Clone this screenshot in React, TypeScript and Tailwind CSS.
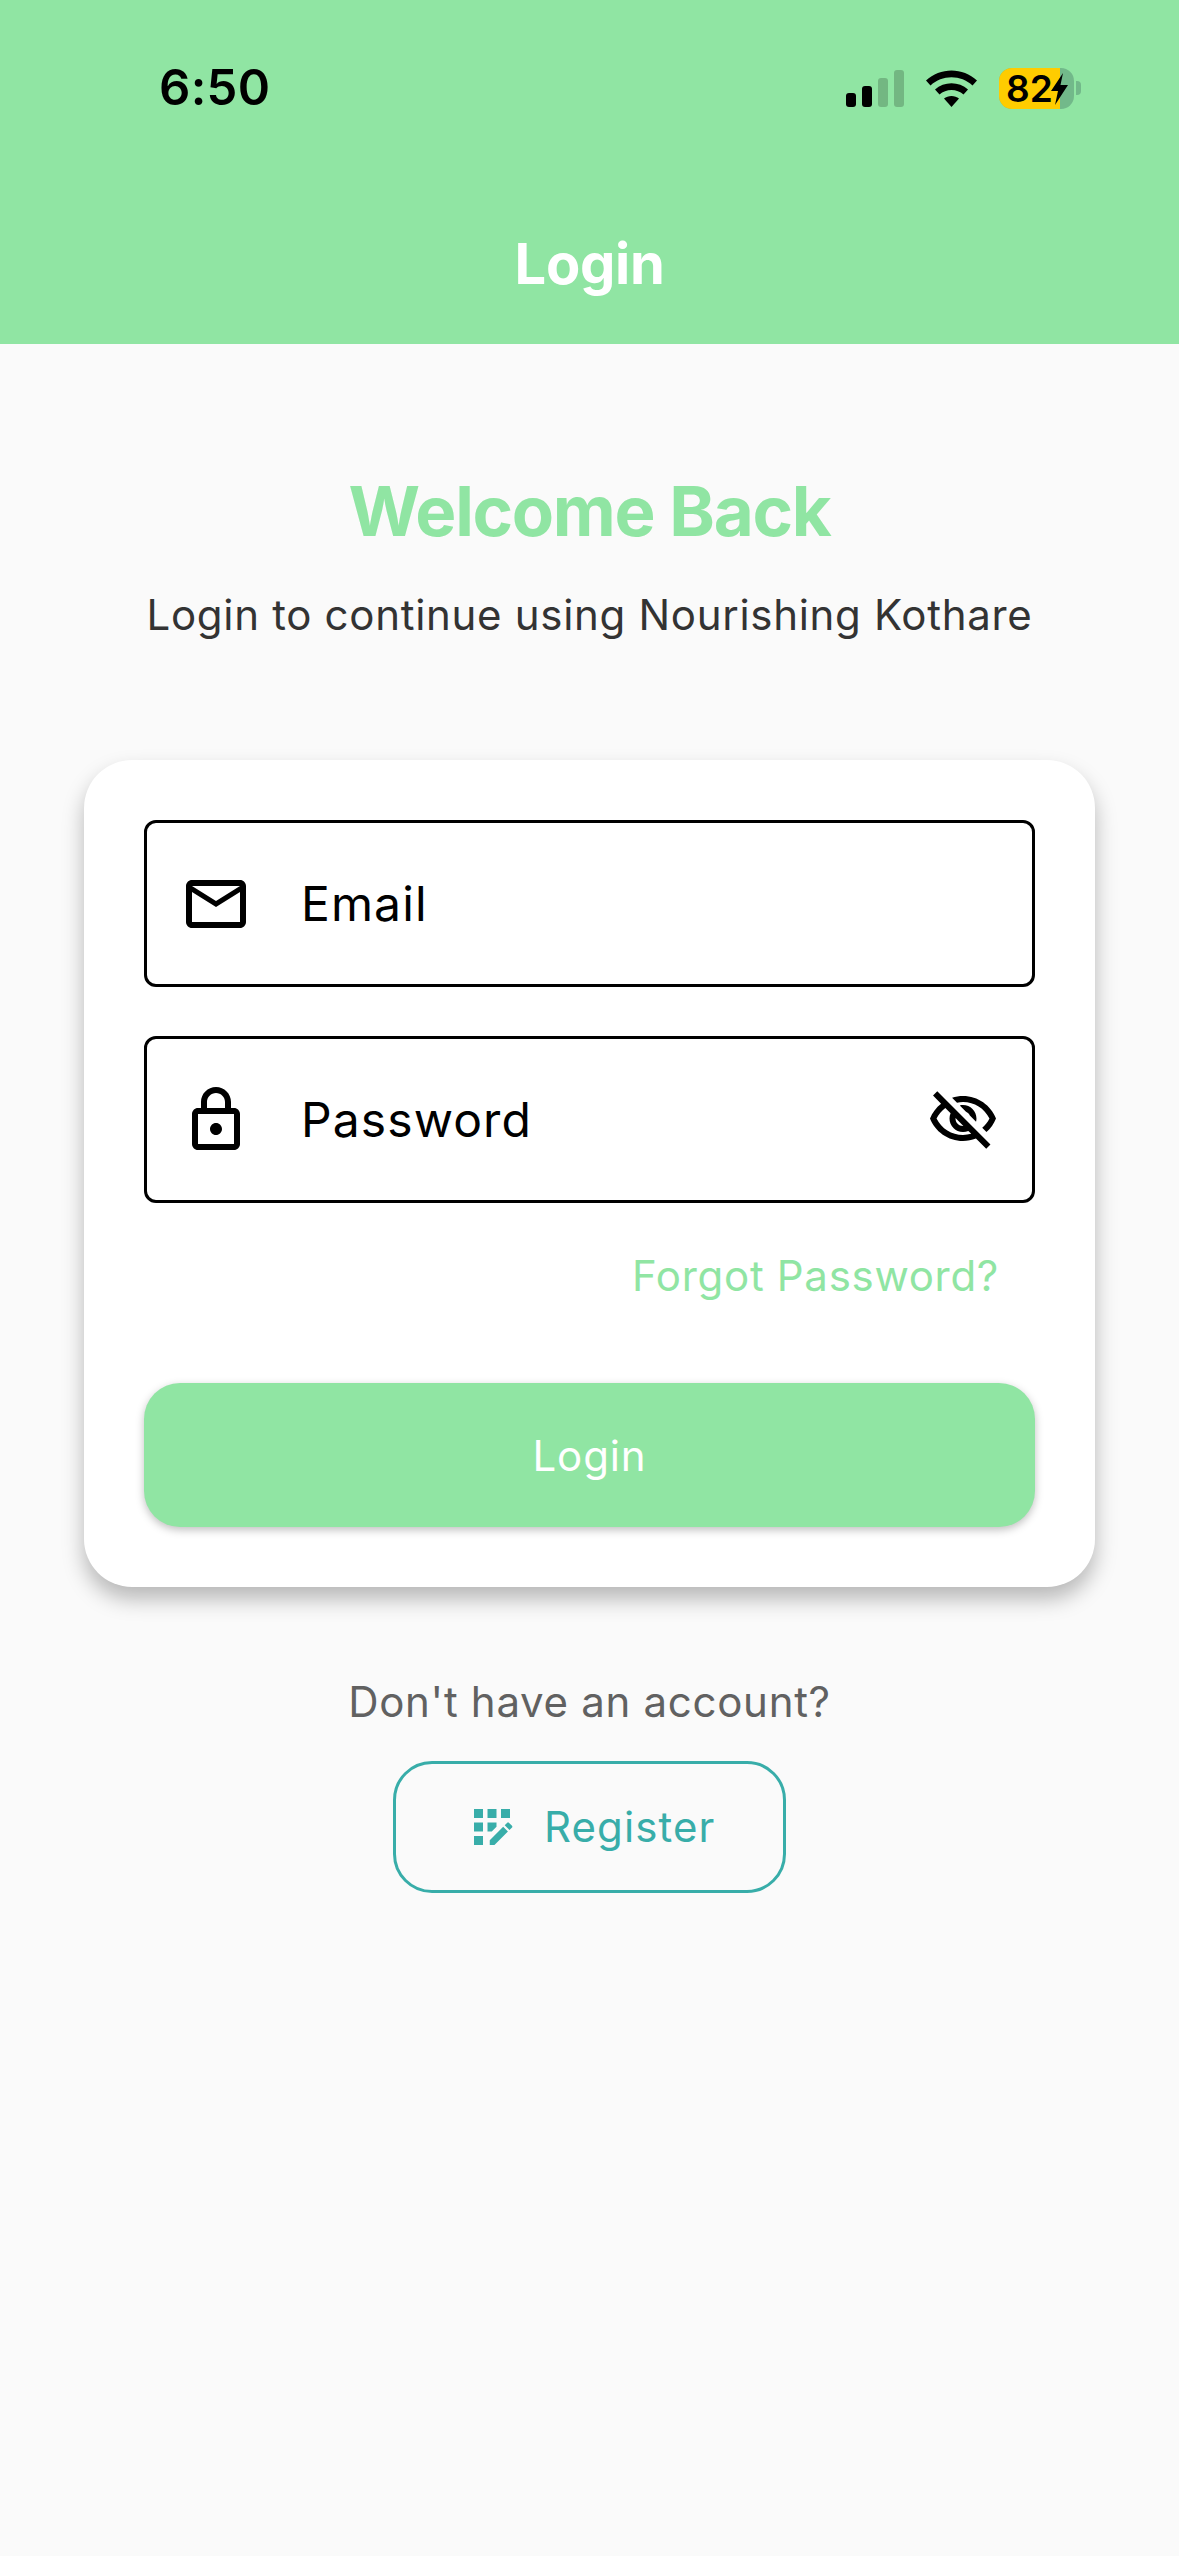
const GREEN = "#90E5A3";

function StatusIcons() {
  return (
    <div className="flex items-center">
      <svg width="58" height="37" viewBox="0 0 58 37" className="block">
        <rect x="0" y="23" width="10" height="14" rx="3" fill="#000" />
        <rect x="16" y="16" width="10" height="21" rx="3" fill="#000" />
        <rect x="32" y="8" width="10" height="29" rx="3" fill="#000" fillOpacity="0.2" />
        <rect x="48" y="0" width="10" height="37" rx="3" fill="#000" fillOpacity="0.2" />
      </svg>
      <svg width="51" height="37" viewBox="0 0 51 37" className="block ml-[22px]">
        <path d="M0 10.5C14-3 37-3 51 10.5L46.5 15.5C35 4.5 16 4.5 4.5 15.5Z" fill="#000" />
        <path d="M9 19.5C18 11 33 11 42 19.5L37.5 24.5C31 18.5 20 18.5 13.5 24.5Z" fill="#000" />
        <path d="M18 28.5C22 25 29 25 33 28.5L25.5 37Z" fill="#000" />
      </svg>
      <div className="relative ml-[22px] w-[75px] h-[41px] rounded-[13px] bg-[#72B98A] flex items-center">
        <div className="absolute left-0 top-0 bottom-0 w-[61px] rounded-l-[13px] bg-[#FFCC00]" />
        <span className="relative pl-[7px] text-[37px] leading-[41px] font-semibold text-black">82</span>
        <svg width="18" height="32" viewBox="0 0 18 32" className="absolute left-[52px] top-[5px]">
          <path d="M12 0L0 18H7L4 32L17 12H9.5Z" fill="#000" />
        </svg>
      </div>
      <div className="ml-[2px] w-[5px] h-[14px] rounded-r-[4px] bg-[#72B98A]" />
    </div>
  );
}

function Icon({ d, size = 72, color = "#000" }: { d: string; size?: number; color?: string }) {
  return (
    <svg width={size} height={size} viewBox="0 0 24 24" className="block shrink-0" fill={color}>
      <path d={d} />
    </svg>
  );
}

const MAIL = "M22 6c0-1.1-.9-2-2-2H4c-1.1 0-2 .9-2 2v12c0 1.1.9 2 2 2h16c1.1 0 2-.9 2-2V6zm-2 0l-8 5-8-5h16zm0 12H4V8l8 5 8-5v10z";
const LOCK = "M18 8h-1V6c0-2.76-2.24-5-5-5S7 3.24 7 6v2H6c-1.1 0-2 .9-2 2v10c0 1.1.9 2 2 2h12c1.1 0 2-.9 2-2V10c0-1.1-.9-2-2-2zM9 6c0-1.66 1.34-3 3-3s3 1.34 3 3v2H9V6zm9 14H6V10h12v10zm-6-3c1.1 0 2-.9 2-2s-.9-2-2-2-2 .9-2 2 .9 2 2 2z";
const EYE_OFF = "M12 6c3.79 0 7.17 2.13 8.82 5.5-.59 1.22-1.42 2.27-2.41 3.12l1.41 1.41c1.39-1.23 2.49-2.77 3.18-4.53C21.27 7.11 17 4 12 4c-1.27 0-2.49.2-3.64.57l1.65 1.65C10.66 6.09 11.32 6 12 6zm-1.07 1.14L13 9.21c.57.25 1.03.71 1.28 1.28l2.07 2.07c.08-.34.14-.7.14-1.07C16.5 9.01 14.48 7 12 7c-.37 0-.72.05-1.07.14zM2.01 3.87l2.68 2.68C3.06 7.83 1.77 9.53 1 11.5 2.73 15.89 7 19 12 19c1.52 0 2.98-.29 4.32-.82l3.42 3.42 1.41-1.41L3.42 2.45 2.01 3.87zm7.5 7.5l2.61 2.61c-.04.01-.08.02-.12.02-1.38 0-2.5-1.12-2.5-2.5 0-.05.01-.08.01-.13zm-3.4-3.4l1.75 1.75c-.23.55-.36 1.15-.36 1.78 0 2.48 2.02 4.5 4.5 4.5.63 0 1.23-.13 1.77-.36l.98.98c-.88.24-1.8.38-2.75.38-3.79 0-7.17-2.13-8.82-5.5.7-1.43 1.72-2.61 2.93-3.53z";
const APP_REG = "M4 4h4v4H4zM10 4h4v4h-4zM4 16h4v4H4zM4 10h4v4H4zM10 10v4h1.9l2.1-2.1V10zM16 4h4v4h-4zM11 17.86V20h2.1l5.98-5.97-2.12-2.12zM17.65 11.2l2.12 2.12 1.13-1.12c.2-.2.2-.51 0-.71l-1.41-1.41a.5.5 0 0 0-.71 0z";

function Field({ icon, label, trailing }: { icon: string; label: string; trailing?: string }) {
  return (
    <div className="h-[167px] rounded-[12px] border-[3px] border-black flex items-center px-[33px]">
      <Icon d={icon} />
      <span className="ml-[49px] flex-1 text-[48px] font-[380] tracking-[1.1px] leading-none text-black">{label}</span>
      {trailing && <Icon d={trailing} />}
    </div>
  );
}

export default function App() {
  return (
    <div className="w-[1179px] h-[2556px] bg-[#FAFAFA] flex flex-col font-['Inter',sans-serif] overflow-hidden">
      <header className="h-[344px] shrink-0 flex flex-col" style={{ backgroundColor: GREEN }}>
        <div className="h-[176px] shrink-0 pl-[159px] pr-[98px] flex items-center justify-between">
          <span className="mt-[-1px] text-[49px] font-semibold text-black leading-none tracking-[0.3px]">6:50</span>
          <StatusIcons />
        </div>
        <h1 className="pt-[8px] text-center text-[56px] font-bold text-white leading-[160px] tracking-[-0.3px]">Login</h1>
      </header>

      <main className="flex-1 flex flex-col items-center">
        <h2 className="mt-[128px] text-[69px] leading-[78px] font-bold tracking-[-1.3px]" style={{ color: GREEN }}>Welcome Back</h2>
        <p className="mt-[40px] text-[42px] font-[380] leading-[50px] tracking-[0.7px] text-[#333333]">Login to continue using Nourishing Kothare</p>

        <section className="mt-[120px] w-[1011px] h-[827px] bg-white rounded-[48px] shadow-[0_12px_21px_rgba(0,0,0,0.27)] px-[60px] pt-[60px]">
          <Field icon={MAIL} label="Email" />
          <div className="h-[49px]" />
          <Field icon={LOCK} label="Password" trailing={EYE_OFF} />
          <div className="mt-[48px] pr-[36px] text-right text-[42px] font-[380] leading-[50px] tracking-[0.7px]" style={{ color: GREEN }}>Forgot Password?</div>
          <button className="mt-[82px] w-full h-[144px] rounded-[36px] text-white text-[42px] font-[380] tracking-[0.9px] shadow-[0_3px_9px_rgba(0,0,0,0.25)]" style={{ backgroundColor: GREEN }}>Login</button>
        </section>

        <p className="mt-[90px] text-[42px] font-[380] leading-[50px] tracking-[0.7px] text-[#616161]">Don't have an account?</p>
        <button className="mt-[34px] w-[393px] h-[132px] rounded-[39px] border-[3px] border-[#38ADA9] flex items-center pl-[69px] text-[#38ADA9]">
          <Icon d={APP_REG} size={54} color="#38ADA9" />
          <span className="ml-[25px] text-[42px] font-[380] tracking-[1.1px] leading-none">Register</span>
        </button>
      </main>
    </div>
  );
}
